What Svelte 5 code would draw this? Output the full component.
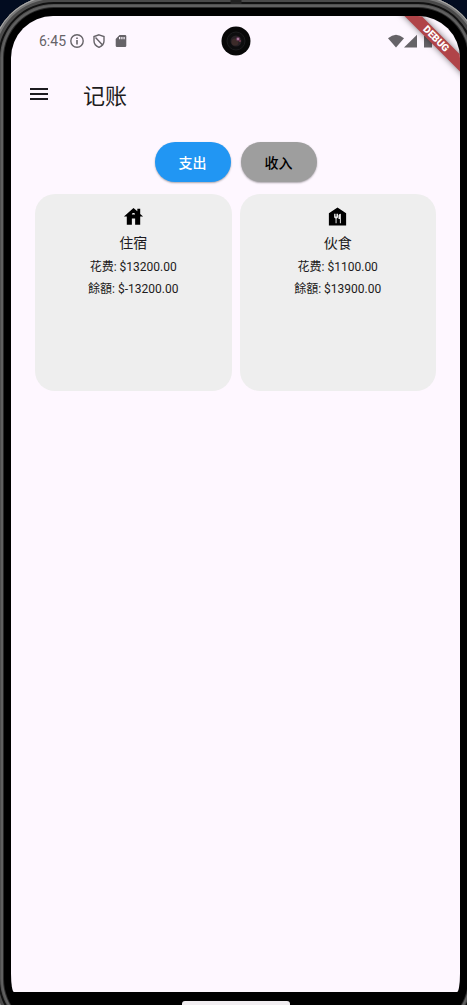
<script>
  const categories = [
    { name: '住宿', icon: 'house', spent: '13200.00', balance: '-13200.00' },
    { name: '伙食', icon: 'food', spent: '1100.00', balance: '13900.00' }
  ];
  let mode = $state('expense');
</script>

<div class="stage">
  <div class="device">
    <span class="earpiece"></span>
    <div class="screen">
      <div class="status">
        <span class="clock">6:45</span>
        <svg width="16" height="16" viewBox="0 0 16 16"><circle cx="8" cy="8" r="6.2" fill="none" stroke="#666368" stroke-width="1.4" /><path d="M7.2 4.4h1.600v1.600H7.200zM7.200 7h1.600v4.600H7.200z" fill="#666368" /></svg>
        <svg width="16" height="16" viewBox="0 0 16 16"><path d="M8 1.800 13 3.600V8c0 3-2.200 5.200-5 6.300C5.200 13.200 3 11 3 8V3.600zM4.500 4.500 11.500 12" fill="none" stroke="#666368" stroke-width="1.400" /></svg>
        <svg width="16" height="16" viewBox="0 0 16 16"><path fill-rule="evenodd" d="M6.500 2H12q1.300 0 1.300 1.300v9.400Q13.300 14 12 14H4q-1.300 0-1.300-1.300V6zM6 4v2.300h1.300V4zm2.300 0v2.300h1.200V4zm2.200 0v2.300h1.200V4z" fill="#666368" /></svg>
        <span class="spacer"></span>
        <div class="signals">
          <svg width="16" height="14" viewBox="0 0 16 14"><path d="M0 4.200Q8-2.800 16 4.200L8 13.500z" fill="#666368" /></svg>
          <svg width="13" height="14" viewBox="0 0 13 14"><path d="M13 .8V13.500H0z" fill="#666368" /></svg>
          <svg class="battery" width="8" height="14" viewBox="0 0 8 14"><path d="M0 2h2V.5h4V2h2v11.500H0z" fill="#666368" /></svg>
        </div>
      </div>

      <svg class="camera" width="30" height="30" viewBox="0 0 30 30">
        <circle cx="15" cy="15" r="14.500" fill="#080808" />
        <circle cx="15" cy="15" r="9" fill="#0d0d0e" stroke="#1c1c1e" />
        <circle cx="15" cy="15" r="5.500" fill="#272125" />
        <circle cx="14" cy="16" r="3.500" fill="#3c2b29" />
        <circle cx="17" cy="13" r="2" fill="#683c5b" />
        <circle cx="17" cy="13" r="1" fill="#bd8bae" />
        <circle cx="19" cy="15" r="1" fill="#7b3b51" />
      </svg>

      <div class="ribbon"><span>DEBUG</span></div>

      <header>
        <button class="menu" aria-label="Menu">
          <svg width="24" height="24" viewBox="0 0 24 24"><path d="M3 7h18M3 12h18M3 17h18" stroke="#1d1b20" stroke-width="2" /></svg>
        </button>
        <h1>记账</h1>
      </header>

      <main>
        <div class="tabs">
          <button class="tab" class:active={mode === 'expense'} onclick={() => (mode = 'expense')}>支出</button>
          <button class="tab" class:active={mode === 'income'} onclick={() => (mode = 'income')}>收入</button>
        </div>
        <div class="cards">
          {#each categories as c}
            <section class="card">
              {#if c.icon === 'house'}
                <svg width="23" height="23" viewBox="0 0 24 24"><path fill-rule="evenodd" d="M19 9.300V4h-3v2.600L12 3 2 12h3v8.500h5.300V14h3.400v6.500H19V12h3zM10.300 10c0-1 .7-1.700 1.700-1.700s1.700.7 1.700 1.700z" /></svg>
              {:else}
                <svg width="23" height="23" viewBox="0 0 24 24"><path fill-rule="evenodd" d="M12 2.500 3 8.500V21.500h18V8.500zM12.500 12.500c0 .8-.7 1.500-1.500 1.500v5h-1v-5c-.8 0-1.500-.7-1.500-1.500V9h1v3h.5V9h1v3h.5V9h1zM15.500 19h-1v-4.500H13V11c0-1.100 1.200-2 2.500-2z" /></svg>
              {/if}
              <h2>{c.name}</h2>
              <p>花费: ${c.spent}</p>
              <p>餘額: ${c.balance}</p>
            </section>
          {/each}
        </div>
      </main>
    </div>
    <span class="handle"></span>
  </div>
</div>

<style>
  :global(body) {
    margin: 0;
    background: #020c20;
  }
  .stage {
    height: 100vh;
    overflow: hidden;
    font-family: Roboto, 'Noto Sans CJK SC', sans-serif;
    color: #1d1b20;
  }
  .device {
    position: relative;
    box-sizing: border-box;
    height: calc(100vh + 40px);
    margin: -4px -13px 0 -8px;
    padding: 20px 20px 49px 19px;
    display: flex;
    flex-direction: column;
    border-radius: 62px;
    background: #000;
    box-shadow:
      inset 0 0 0 1px #aaa,
      inset 0 0 0 3px #777,
      inset 0 0 0 6px #4a4a4a,
      inset 0 0 0 8px #111,
      inset 0 0 0 9px #505050,
      inset 0 0 0 11px #606060,
      inset 0 0 0 12px #2a2a2a;
  }
  .earpiece {
    position: absolute;
    top: 4px;
    left: 50%;
    width: 11px;
    height: 4px;
    transform: translateX(-50%);
    background: #222;
  }
  .handle {
    position: absolute;
    bottom: 32px;
    left: 50%;
    width: 108px;
    height: 8px;
    transform: translateX(-50%);
    border-radius: 3px;
    background: #f0edf0;
  }
  .screen {
    position: relative;
    flex: 1;
    overflow: hidden;
    border-radius: 42px 42px 3px 3px / 42px 42px 18px 18px;
    background: #fef7ff;
  }
  .status {
    display: flex;
    align-items: center;
    gap: 6px;
    height: 50px;
    padding: 0 28px;
    color: #666368;
  }
  .clock {
    margin-right: -3px;
    font-size: 14px;
  }
  .spacer {
    flex: 1;
  }
  .signals {
    display: flex;
  }
  .battery {
    margin-left: 7px;
  }
  .camera {
    position: absolute;
    top: 10px;
    left: 50%;
    transform: translateX(-50%);
  }
  .ribbon {
    position: absolute;
    top: 17px;
    right: -36px;
    width: 120px;
    height: 12px;
    transform: rotate(45deg);
    background: #b04448;
    box-shadow: 0 0 6px #0008;
    color: #fff;
    font-size: 10px;
    font-weight: 900;
    line-height: 12px;
    text-align: center;
  }
  header {
    display: flex;
    align-items: center;
    gap: 32px;
    height: 56px;
    padding: 0 16px;
  }
  button {
    border: 0;
    font-family: inherit;
    cursor: pointer;
  }
  .menu {
    display: flex;
    padding: 0;
    background: none;
  }
  h1 {
    margin: 0;
    font-size: 22px;
    font-weight: 400;
  }
  main {
    padding: 20px 24px;
  }
  .tabs {
    display: flex;
    justify-content: center;
    gap: 10px;
  }
  .tab {
    height: 40px;
    padding: 0 24px;
    border-radius: 20px;
    background: #9e9e9e;
    box-shadow: 0 1px 2px #0005;
    color: #000;
    font-size: 14px;
    font-weight: 500;
  }
  .active {
    background: #2196f3;
    color: #fff;
  }
  .cards {
    display: grid;
    grid-template-columns: 1fr 1fr;
    gap: 8px;
    margin-top: 12px;
  }
  .card {
    box-sizing: border-box;
    aspect-ratio: 1;
    padding-top: 11px;
    display: flex;
    flex-direction: column;
    align-items: center;
    border-radius: 20px;
    background: #eee;
  }
  .card svg {
    fill: #000;
  }
  h2 {
    margin: 4px 0 2px;
    font-size: 14px;
    font-weight: 400;
    line-height: 22px;
  }
  p {
    margin: 0;
    font-size: 12px;
    line-height: 22px;
  }
</style>
